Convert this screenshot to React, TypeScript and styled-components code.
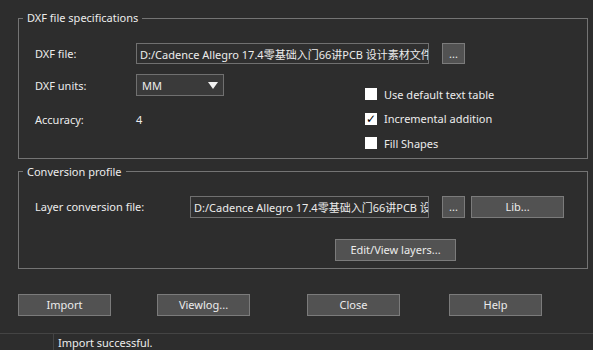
import React from "react";
import styled, { createGlobalStyle } from "styled-components";

const Global = createGlobalStyle`
  html, body { margin: 0; padding: 0; background: #2d2d2d; }
  body {
    font-family: "Noto Sans", "Noto Sans CJK SC", sans-serif;
    font-size: 11px;
    color: #ececec;
  }
  * { box-sizing: border-box; }
`;

const Window = styled.div`
  width: 593px;
  height: 350px;
  background: #2d2d2d;
  display: flex;
  flex-direction: column;
  overflow: hidden;
`;

const Body = styled.div`
  padding: 10px 5px 0 18px;
  display: flex;
  flex-direction: column;
`;

const Group = styled.fieldset<{ $gapTop?: number; $padBottom: number; $padTop: number }>`
  margin: ${(p) => p.$gapTop ?? 0}px 0 0 0;
  min-width: 0;
  width: 570px;
  border: 1px solid #747474;
  padding: ${(p) => p.$padTop}px 0 ${(p) => p.$padBottom}px 16px;
`;

const Legend = styled.legend`
  padding: 0 4px;
  margin-left: -12px;
  line-height: 16px;
  font-size: 11px;
  color: #ececec;
`;

const Row = styled.div<{ $mt?: number; $h?: number }>`
  display: flex;
  align-items: center;
  height: ${(p) => p.$h ?? 22}px;
  margin-top: ${(p) => p.$mt ?? 0}px;
`;

const Label = styled.span<{ $w: number }>`
  width: ${(p) => p.$w}px;
  flex: none;
  white-space: nowrap;
`;

const TextBox = styled.div<{ $w: number }>`
  width: ${(p) => p.$w}px;
  height: 100%;
  flex: none;
  border: 1px solid #707070;
  background: #2f2f2f;
  padding: 0 0 0 3px;
  display: flex;
  align-items: center;
  overflow: hidden;
  white-space: nowrap;
  font-family: "Noto Sans", "Noto Sans CJK SC", sans-serif;
`;

const Button = styled.button<{ $w: number; $ml?: number }>`
  width: ${(p) => p.$w}px;
  height: 100%;
  flex: none;
  margin-left: ${(p) => p.$ml ?? 0}px;
  border: 1px solid #7b7b7b;
  background: #525252;
  color: #ececec;
  font-family: "Noto Sans", sans-serif;
  font-size: 11px;
  padding: 0;
  display: flex;
  align-items: center;
  justify-content: center;
`;

const Combo = styled.div`
  width: 88px;
  height: 100%;
  flex: none;
  border: 1px solid #707070;
  background: #3a3a3a;
  display: flex;
  align-items: center;
  justify-content: space-between;
  padding: 0 5px 0 5px;
`;

const Arrow = styled.span`
  width: 0;
  height: 0;
  border-left: 5px solid transparent;
  border-right: 5px solid transparent;
  border-top: 7px solid #f2f2f2;
`;

const Lower = styled.div`
  display: flex;
  margin-top: 10px;
`;

const LeftCol = styled.div`
  width: 330px;
  flex: none;
  display: flex;
  flex-direction: column;
`;

const CheckList = styled.div`
  display: flex;
  flex-direction: column;
  padding-top: 8px;
`;

const CheckRow = styled.label`
  display: flex;
  align-items: center;
  height: 24.5px;
  gap: 7px;
`;

const Box = styled.span`
  width: 12px;
  height: 12px;
  background: #ffffff;
  color: #000;
  display: flex;
  align-items: center;
  justify-content: center;
  font-size: 12px;
  line-height: 1;
  font-family: "DejaVu Sans", sans-serif;
`;

const CenterRow = styled.div`
  display: flex;
  justify-content: flex-start;
  padding-left: 300px;
  height: 22px;
  margin-top: 21px;
`;

const ButtonBar = styled.div`
  display: flex;
  height: 22px;
  margin-top: 25px;
  padding-left: 18px;
`;

const StatusBar = styled.div`
  margin-top: auto;
  height: 17px;
  border-top: 1px solid #444444;
  display: flex;
  align-items: stretch;
`;

const StatusCell = styled.div<{ $w?: number }>`
  width: ${(p) => (p.$w ? `${p.$w}px` : "auto")};
  flex: ${(p) => (p.$w ? "none" : "1")};
  border-right: ${(p) => (p.$w ? "1px solid #444444" : "none")};
  padding-left: ${(p) => (p.$w ? 0 : 4)}px;
  display: flex;
  align-items: center;
  white-space: nowrap;
`;

const FILE = "D:/Cadence Allegro 17.4零基础入门66讲PCB 设计素材文件";

function Check({ checked, text }: { checked?: boolean; text: string }) {
  return (
    <CheckRow>
      <Box>{checked ? "✓" : ""}</Box>
      <span>{text}</span>
    </CheckRow>
  );
}

export default function App() {
  return (
    <>
      <Global />
      <Window>
        <Body>
          <Group $padTop={17} $padBottom={2}>
            <Legend>DXF file specifications</Legend>
            <Row $h={21}>
              <Label $w={101}>DXF file:</Label>
              <TextBox $w={293}>{FILE}</TextBox>
              <Button $w={23} $ml={13}>...</Button>
            </Row>
            <Lower>
              <LeftCol>
                <Row>
                  <Label $w={101}>DXF units:</Label>
                  <Combo>
                    <span>MM</span>
                    <Arrow />
                  </Combo>
                </Row>
                <Row $mt={12}>
                  <Label $w={101}>Accuracy:</Label>
                  <span>4</span>
                </Row>
              </LeftCol>
              <CheckList>
                <Check text="Use default text table" />
                <Check checked text="Incremental addition" />
                <Check text="Fill Shapes" />
              </CheckList>
            </Lower>
          </Group>
          <Group $gapTop={5} $padTop={16} $padBottom={7}>
            <Legend>Conversion profile</Legend>
            <Row>
              <Label $w={155}>Layer conversion file:</Label>
              <TextBox $w={239}>{FILE}</TextBox>
              <Button $w={23} $ml={13}>...</Button>
              <Button $w={93} $ml={6}>Lib...</Button>
            </Row>
            <CenterRow>
              <Button $w={121}>Edit/View layers...</Button>
            </CenterRow>
          </Group>
        </Body>
        <ButtonBar>
          <Button $w={93}>Import</Button>
          <Button $w={93} $ml={46}>Viewlog...</Button>
          <Button $w={93} $ml={57}>Close</Button>
          <Button $w={93} $ml={49}>Help</Button>
        </ButtonBar>
        <StatusBar>
          <StatusCell $w={54} />
          <StatusCell>Import successful.</StatusCell>
        </StatusBar>
      </Window>
    </>
  );
}
